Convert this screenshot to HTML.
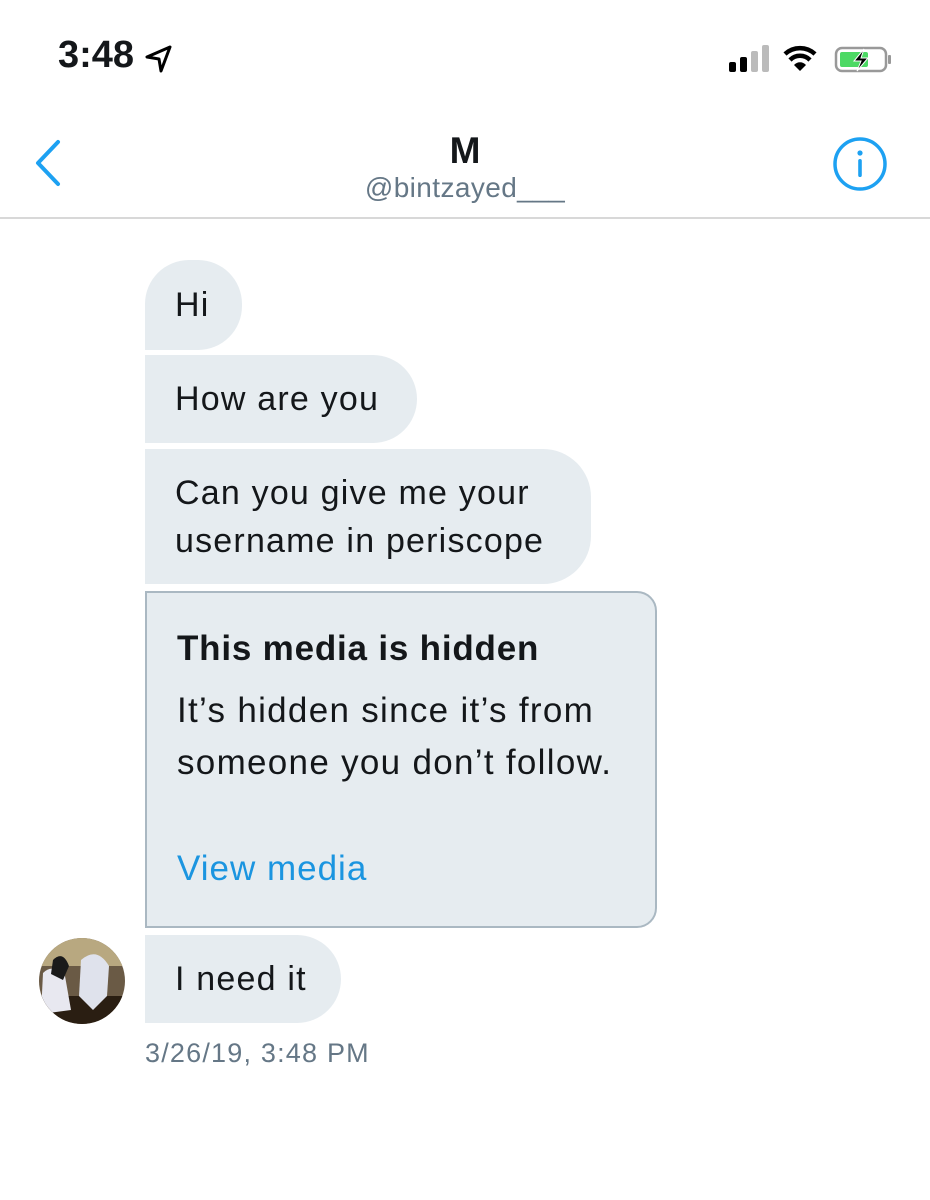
<!DOCTYPE html>
<html><head><meta charset="utf-8"><style>
*{margin:0;padding:0;box-sizing:border-box}
body{width:930px;height:1200px;background:#fff;position:relative;font-family:"Liberation Sans",sans-serif;overflow:hidden;color:#14171a}
.a{position:absolute}
.b{position:absolute;left:145px;background:#e6ecf0;font-size:34px;letter-spacing:1.2px;line-height:48px;padding:0 30px;border-radius:0 44px 44px 0;display:flex;flex-direction:column;justify-content:center;white-space:nowrap}
</style></head><body>
<div class="a" style="left:58px;top:34px;font-size:38px;font-weight:bold;letter-spacing:0px">3:48</div>
<svg class="a" style="left:144px;top:44px" width="30" height="30" viewBox="0 0 30 30"><path d="M26 3 L3 13 L15 15 L17 27 Z" fill="none" stroke="#000" stroke-width="3" stroke-linejoin="round"/></svg>
<svg class="a" style="left:728px;top:44px" width="170" height="30" viewBox="0 0 170 30">
<rect x="1" y="18" width="7" height="10" rx="2" fill="#000"/><rect x="12" y="13" width="7" height="15" rx="2" fill="#000"/><rect x="23" y="7" width="7" height="21" rx="2" fill="#bbb"/><rect x="34" y="1" width="7" height="27" rx="2" fill="#bbb"/>
<path d="M57 10 A22 22 0 0 1 87 10" fill="none" stroke="#000" stroke-width="4.5"/><path d="M62 16 A14 14 0 0 1 82 16" fill="none" stroke="#000" stroke-width="4.5"/><path d="M66 21 L72 27 L78 21 A8 8 0 0 0 66 21Z" fill="#000"/>
<rect x="108" y="4" width="50" height="23" rx="6" fill="none" stroke="#999" stroke-width="2.5"/><rect x="112" y="8" width="28" height="15" rx="2" fill="#4cd964"/><rect x="160" y="11" width="3" height="9" rx="1" fill="#999"/>
<path d="M136 5 L126 17 L133 17 L129 27 L140 14 L133 14 Z" fill="#000" stroke="#fff" stroke-width="1"/></svg>
<svg class="a" style="left:30px;top:138px" width="36" height="50" viewBox="0 0 36 50"><path d="M28 4 L8 25 L28 46" fill="none" stroke="#1da1f2" stroke-width="4" stroke-linecap="round" stroke-linejoin="round"/></svg>
<div class="a" style="left:0;width:930px;top:130px;text-align:center;font-size:37px;font-weight:bold">M</div>
<div class="a" style="left:0;width:930px;top:172px;text-align:center;font-size:28px;letter-spacing:0.4px;color:#657786">@bintzayed___</div>
<svg class="a" style="left:832px;top:136px" width="56" height="56" viewBox="0 0 56 56"><circle cx="28" cy="28" r="25" fill="none" stroke="#1da1f2" stroke-width="3.5"/><circle cx="28" cy="17" r="2.6" fill="#1da1f2"/><rect x="26.2" y="23" width="3.6" height="18" rx="1.8" fill="#1da1f2"/></svg>
<div class="a" style="left:0;top:217px;width:930px;height:2px;background:#d8d8d8"></div>
<div class="b" style="top:260px;width:97px;height:90px;border-radius:44px 44px 44px 0">Hi</div>
<div class="b" style="top:355px;width:272px;height:88px">How are you</div>
<div class="b" style="top:449px;width:446px;height:135px;border-radius:0 48px 48px 0">Can you give me your<br>username in periscope</div>
<div class="a" style="left:145px;top:591px;width:512px;height:337px;background:#e6ecf0;border:2px solid #aab8c2;border-radius:0 20px 20px 0;padding:36px 0 0 30px;white-space:nowrap">
<div style="font-size:35px;letter-spacing:0.8px;font-weight:bold;line-height:40px">This media is hidden</div>
<div style="font-size:35px;letter-spacing:1.3px;line-height:52px;margin-top:16px">It’s hidden since it’s from<br>someone you don’t follow.</div>
<div style="font-size:35px;letter-spacing:1px;line-height:40px;margin-top:60px;color:#1b95e0">View media</div>
</div>
<svg class="a" style="left:39px;top:938px" width="86" height="86" viewBox="0 0 86 86"><defs><clipPath id="c"><circle cx="43" cy="43" r="43"/></clipPath></defs><g clip-path="url(#c)"><rect width="86" height="86" fill="#6a5a45"/><rect width="86" height="28" fill="#b8a880"/><rect x="0" y="58" width="86" height="28" fill="#2a1e12"/><path d="M4 35 Q14 25 26 38 L32 72 L2 76Z" fill="#e8e8f0"/><path d="M14 22 Q24 12 30 28 L24 42 L12 36Z" fill="#1a1a1a"/><path d="M42 22 Q58 8 70 28 L68 58 L54 72 L40 58Z" fill="#dfe2ec"/></g></svg>
<div class="b" style="top:935px;width:196px;height:88px">I need it</div>
<div class="a" style="left:145px;top:1038px;font-size:27px;letter-spacing:1.2px;color:#657786">3/26/19, 3:48 PM</div>
</body></html>
